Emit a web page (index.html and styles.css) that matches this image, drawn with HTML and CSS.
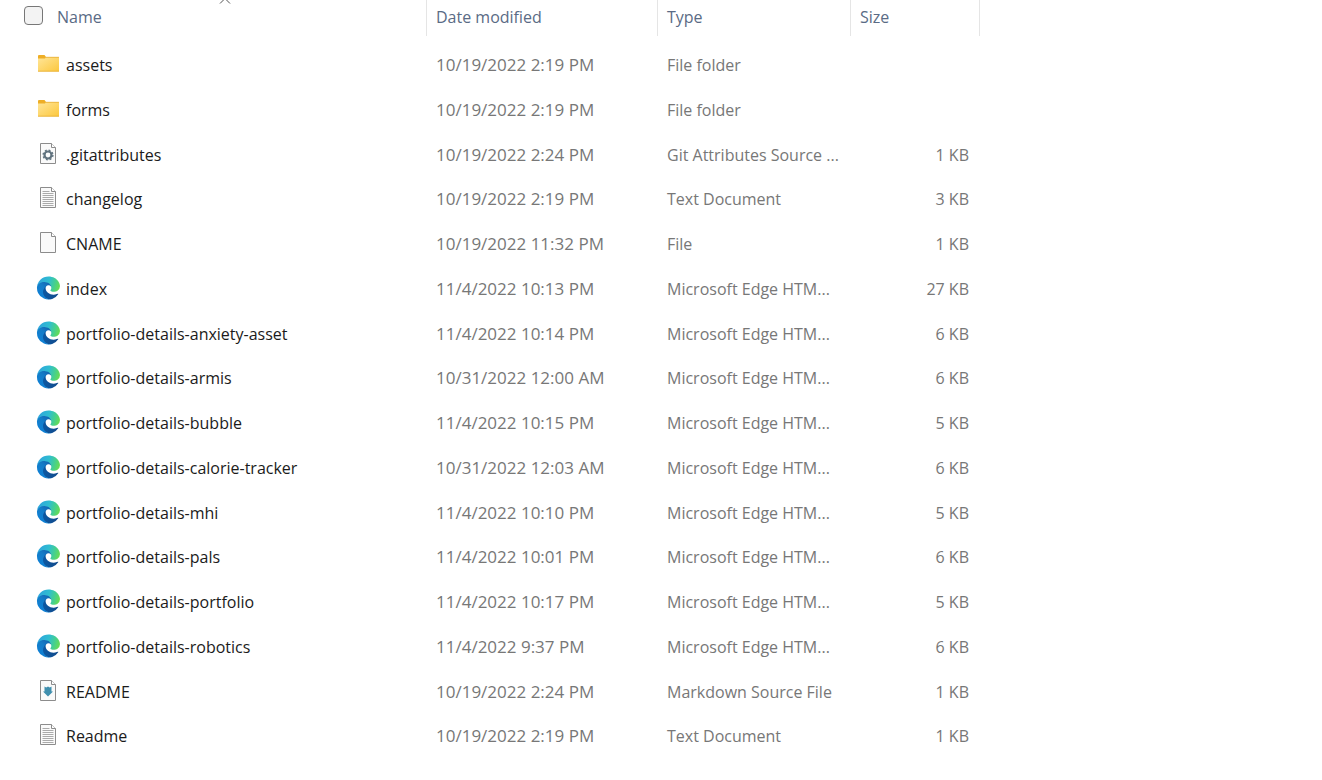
FILE: index.html
```
<!DOCTYPE html>
<html lang="en">
<head>
    <meta charset="UTF-8">
    <meta name="viewport" content="width=device-width, initial-scale=1.0">
    <title>Files</title>
    <link rel="stylesheet" href="styles.css">
</head>
<body>
    <svg class="icon-defs" width="0" height="0" aria-hidden="true">
        <defs>
            <linearGradient id="folderFill" x1="0" y1="0" x2="1" y2="1">
                <stop offset="0" stop-color="#ffe69a"/>
                <stop offset="1" stop-color="#fcc73c"/>
            </linearGradient>
            <linearGradient id="edgeDark" x1="63" y1="178" x2="241" y2="178" gradientUnits="userSpaceOnUse">
                <stop offset="0" stop-color="#0c59a4"/>
                <stop offset="1" stop-color="#114a8b"/>
            </linearGradient>
            <linearGradient id="edgeBlue" x1="157" y1="105" x2="50" y2="225" gradientUnits="userSpaceOnUse">
                <stop offset="0" stop-color="#1468b4"/>
                <stop offset="0.4" stop-color="#147cc8"/>
                <stop offset="1" stop-color="#0f80d4"/>
            </linearGradient>
            <linearGradient id="edgeGreen" x1="20" y1="60" x2="250" y2="130" gradientUnits="userSpaceOnUse">
                <stop offset="0" stop-color="#2fa6dc"/>
                <stop offset="0.45" stop-color="#2fbdd0"/>
                <stop offset="0.75" stop-color="#45cf90"/>
                <stop offset="1" stop-color="#66dc55"/>
            </linearGradient>
        </defs>
        <symbol id="folder" viewBox="0 0 24 24">
            <path d="M2 4q0-1 1-1h5.500l1.500 2v3H2z" fill="#eeae26"/>
            <path d="M2 6.500h7l1-1.500h12.500q.5 0 .5.500V19q0 .5-.5.500h-20q-.5 0-.5-.5z" fill="url(#folderFill)"/>
            <path d="M9.500 5.300H23M2 19.200h21" fill="none" stroke="#e6ad36" stroke-width=".8"/>
        </symbol>
        <symbol id="page" viewBox="0 0 24 24">
            <path d="M4.500 1.500h11l4 4v16h-15z" fill="#fafafa" stroke="#8c8c8c"/>
            <path d="M15.500 1.500v4h4" fill="#fff" stroke="#8c8c8c"/>
        </symbol>
        <symbol id="text" viewBox="0 0 24 24">
            <use href="#page"/>
            <path d="M6.500 5.500h7M6.500 7.500h11M6.500 9.500h11M6.500 11.500h11M6.500 13.500h11M6.500 15.500h11M6.500 17.500h11M6.500 19.500h11" stroke="#aaa"/>
        </symbol>
        <symbol id="config" viewBox="0 0 24 24">
            <use href="#page"/>
            <circle cx="12" cy="13" r="3.500" fill="none" stroke="#60727e" stroke-width="2.200"/>
            <circle cx="12" cy="13" r="4.900" fill="none" stroke="#60727e" stroke-width="1.400" stroke-dasharray="1.950 1.898"/>
        </symbol>
        <symbol id="markdown" viewBox="0 0 24 24">
            <use href="#page"/>
            <path d="M8.500 7.500l1.700 1 1.800-1 1.800 1 1.700-1v5h1.500L12 17.500l-5-5h1.500z" fill="#3f8fae"/>
        </symbol>
        <symbol id="edge" viewBox="-6 -1 267 267">
            <path fill="url(#edgeDark)" d="M235.680 195.510a93.730 93.730 0 0 1-10.540 4.710 101.870 101.870 0 0 1-35.900 6.460c-47.320 0-88.540-32.550-88.540-74.320A31.480 31.480 0 0 1 117.130 105c-42.800 1.800-53.800 46.400-53.800 72.530 0 73.880 68.090 81.370 82.760 81.370 7.910 0 19.840-2.300 27-4.560l1.310-.44a128.340 128.340 0 0 0 66.600-52.800 4 4 0 0 0-5.320-5.590z"/>
            <path fill="url(#edgeBlue)" d="M110.340 246.340A79.200 79.200 0 0 1 87.600 225a80.720 80.720 0 0 1 29.530-120c3.120-1.470 8.450-4.130 15.540-4a32.350 32.350 0 0 1 25.690 13 31.880 31.880 0 0 1 6.360 18.660c0-.21 24.460-79.600-80-79.600-43.900 0-80 41.660-80 78.210a130.150 130.150 0 0 0 12.110 56 128 128 0 0 0 156.380 67.110 75.550 75.550 0 0 1-62.780-8z"/>
            <path fill="url(#edgeGreen)" d="M156.940 153.780c-.81 1.050-3.300 2.500-3.300 5.660 0 2.610 1.700 5.120 4.720 7.230 14.380 10 41.490 8.680 41.560 8.680a59.560 59.560 0 0 0 30.270-8.350 61.380 61.380 0 0 0 30.430-52.880c.26-22.410-8-37.310-11.340-43.910C228.090 28.760 182.350 4.920 132.610 4.920a128 128 0 0 0-128 126.200c.48-36.540 36.800-66.050 80-66.050 3.500 0 23.460.34 42 10.070 16.340 8.580 24.900 18.940 30.850 29.210 6.180 10.670 7.280 24.150 7.280 29.520s-2.740 13.330-7.800 19.910z"/>
        </symbol>
    </svg>
    <table class="files">
        <colgroup>
            <col class="col-name">
            <col class="col-date">
            <col class="col-type">
            <col class="col-size">
            <col>
        </colgroup>
        <thead>
            <tr>
                <th aria-sort="ascending">
                    <div class="head">
                        <svg class="sort" viewBox="0 0 12 7" aria-hidden="true"><path d="M1 6.500l5-5 5 5"/></svg>
                        <input type="checkbox" id="selectAll" aria-label="Select all">
                        <button type="button">Name</button>
                    </div>
                </th>
                <th><div class="head"><button type="button">Date modified</button></div></th>
                <th><div class="head"><button type="button">Type</button></div></th>
                <th><div class="head"><button type="button">Size</button></div></th>
                <th></th>
            </tr>
        </thead>
        <tbody>
            <tr>
                <td><div class="name"><svg class="icon"><use href="#folder"/></svg>assets</div></td>
                <td>10/19/2022 2:19 PM</td>
                <td>File folder</td>
                <td></td>
            </tr>
            <tr>
                <td><div class="name"><svg class="icon"><use href="#folder"/></svg>forms</div></td>
                <td>10/19/2022 2:19 PM</td>
                <td>File folder</td>
                <td></td>
            </tr>
            <tr>
                <td><div class="name"><svg class="icon"><use href="#config"/></svg>.gitattributes</div></td>
                <td>10/19/2022 2:24 PM</td>
                <td>Git Attributes Source ...</td>
                <td>1 KB</td>
            </tr>
            <tr>
                <td><div class="name"><svg class="icon"><use href="#text"/></svg>changelog</div></td>
                <td>10/19/2022 2:19 PM</td>
                <td>Text Document</td>
                <td>3 KB</td>
            </tr>
            <tr>
                <td><div class="name"><svg class="icon"><use href="#page"/></svg>CNAME</div></td>
                <td>10/19/2022 11:32 PM</td>
                <td>File</td>
                <td>1 KB</td>
            </tr>
            <tr>
                <td><div class="name"><svg class="icon"><use href="#edge"/></svg>index</div></td>
                <td>11/4/2022 10:13 PM</td>
                <td>Microsoft Edge HTM...</td>
                <td>27 KB</td>
            </tr>
            <tr>
                <td><div class="name"><svg class="icon"><use href="#edge"/></svg>portfolio-details-anxiety-asset</div></td>
                <td>11/4/2022 10:14 PM</td>
                <td>Microsoft Edge HTM...</td>
                <td>6 KB</td>
            </tr>
            <tr>
                <td><div class="name"><svg class="icon"><use href="#edge"/></svg>portfolio-details-armis</div></td>
                <td>10/31/2022 12:00 AM</td>
                <td>Microsoft Edge HTM...</td>
                <td>6 KB</td>
            </tr>
            <tr>
                <td><div class="name"><svg class="icon"><use href="#edge"/></svg>portfolio-details-bubble</div></td>
                <td>11/4/2022 10:15 PM</td>
                <td>Microsoft Edge HTM...</td>
                <td>5 KB</td>
            </tr>
            <tr>
                <td><div class="name"><svg class="icon"><use href="#edge"/></svg>portfolio-details-calorie-tracker</div></td>
                <td>10/31/2022 12:03 AM</td>
                <td>Microsoft Edge HTM...</td>
                <td>6 KB</td>
            </tr>
            <tr>
                <td><div class="name"><svg class="icon"><use href="#edge"/></svg>portfolio-details-mhi</div></td>
                <td>11/4/2022 10:10 PM</td>
                <td>Microsoft Edge HTM...</td>
                <td>5 KB</td>
            </tr>
            <tr>
                <td><div class="name"><svg class="icon"><use href="#edge"/></svg>portfolio-details-pals</div></td>
                <td>11/4/2022 10:01 PM</td>
                <td>Microsoft Edge HTM...</td>
                <td>6 KB</td>
            </tr>
            <tr>
                <td><div class="name"><svg class="icon"><use href="#edge"/></svg>portfolio-details-portfolio</div></td>
                <td>11/4/2022 10:17 PM</td>
                <td>Microsoft Edge HTM...</td>
                <td>5 KB</td>
            </tr>
            <tr>
                <td><div class="name"><svg class="icon"><use href="#edge"/></svg>portfolio-details-robotics</div></td>
                <td>11/4/2022 9:37 PM</td>
                <td>Microsoft Edge HTM...</td>
                <td>6 KB</td>
            </tr>
            <tr>
                <td><div class="name"><svg class="icon"><use href="#markdown"/></svg>README</div></td>
                <td>10/19/2022 2:24 PM</td>
                <td>Markdown Source File</td>
                <td>1 KB</td>
            </tr>
            <tr>
                <td><div class="name"><svg class="icon"><use href="#text"/></svg>Readme</div></td>
                <td>10/19/2022 2:19 PM</td>
                <td>Text Document</td>
                <td>1 KB</td>
            </tr>
        </tbody>
    </table>
</body>
</html>
```
FILE: styles.css
```
body {
    margin: 0;
    padding-left: 24px;
    background-color: #fff;
    font-family: "Segoe UI", "Open Sans", "Noto Sans", sans-serif;
    font-size: 16px;
    line-height: 24px;
    color: #777;
}
.icon-defs {
    display: block;
}
.files {
    width: 100%;
    table-layout: fixed;
    border-collapse: collapse;
}
.col-name {
    width: 403px;
}
.col-date {
    width: 231px;
}
.col-type {
    width: 193px;
}
.col-size {
    width: 129px;
}
th {
    height: 42px;
    padding: 0;
    vertical-align: top;
}
.head {
    position: relative;
    display: flex;
    align-items: center;
    height: 36px;
    padding-left: 9px;
    border-right: 1px solid #e5e5e5;
}
th:first-child .head {
    padding-left: 0;
    gap: 14px;
}
.head button {
    padding: 0 0 2px;
    border: none;
    background: none;
    font: inherit;
    font-weight: normal;
    color: #5a6b85;
}
.head input {
    appearance: none;
    width: 19px;
    height: 19px;
    margin: 0 0 5px;
    border: 1px solid #777;
    border-radius: 4px;
    background-color: #f3f3f3;
}
.sort {
    position: absolute;
    top: -3px;
    left: 50%;
    width: 12px;
    height: 7px;
    margin-left: -6px;
    fill: none;
    stroke: #555;
}
td {
    height: 45px;
    padding: 0 0 0 9px;
    white-space: nowrap;
}
/* four rows take 179px */
tr:nth-child(4n) td {
    height: 44px;
}
td:first-child {
    padding-left: 12px;
    color: #1b1b1b;
}
td:nth-child(2) {
    font-size: 17px;
}
td:nth-child(4) {
    padding-right: 11px;
    text-align: right;
}
.name {
    display: flex;
    align-items: center;
    gap: 6px;
}
.icon {
    width: 24px;
    height: 24px;
    margin-bottom: 2px;
}
```
